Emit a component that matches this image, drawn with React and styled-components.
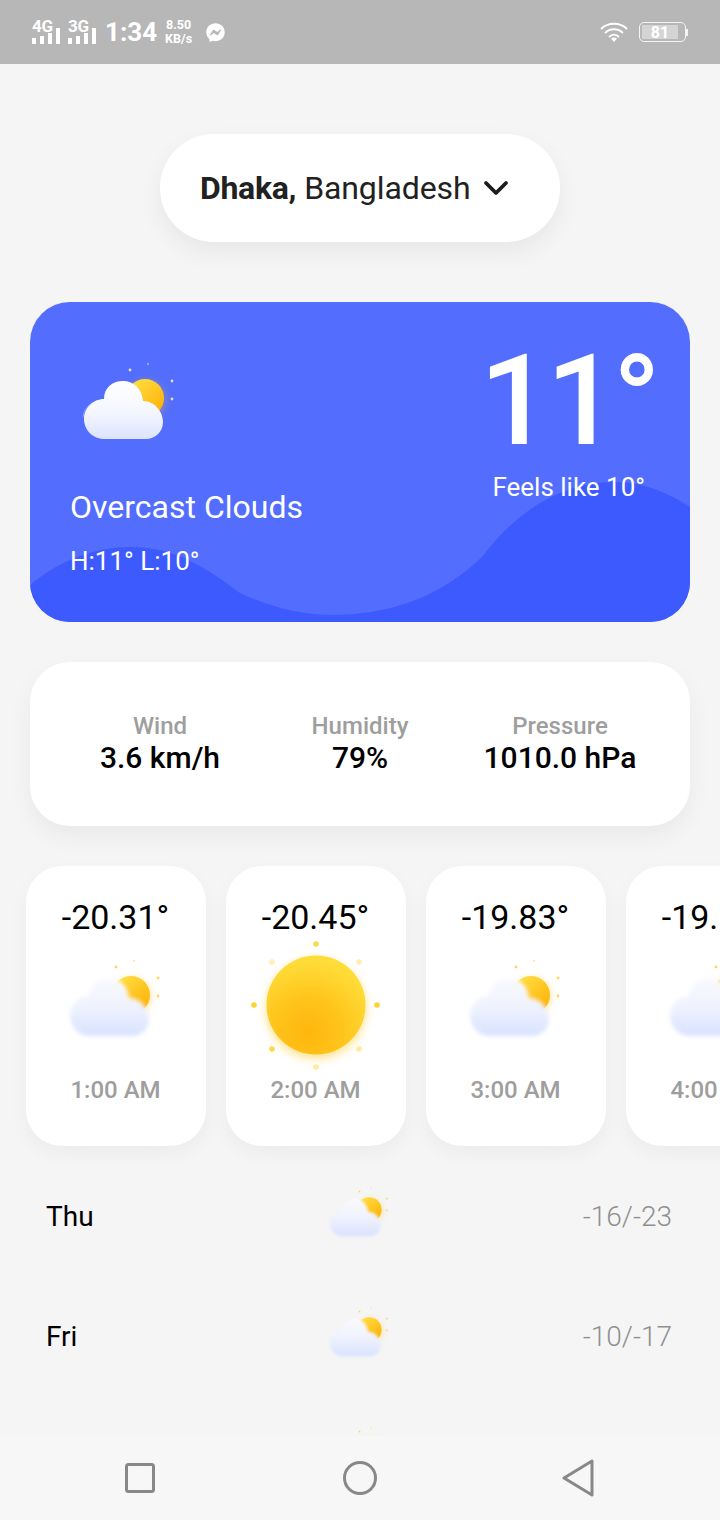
import React from "react";
import styled, { createGlobalStyle } from "styled-components";
import { FaFacebookMessenger } from "react-icons/fa";

const hours = [
  { temp: "-20.31°", time: "1:00 AM", icon: "cloud" },
  { temp: "-20.45°", time: "2:00 AM", icon: "sun" },
  { temp: "-19.83°", time: "3:00 AM", icon: "cloud" },
  { temp: "-19.52°", time: "4:00 AM", icon: "cloud" },
];

const days = [
  { day: "Thu", range: "-16/-23" },
  { day: "Fri", range: "-10/-17" },
  { day: "", range: "" },
];

const stats = [
  { label: "Wind", value: "3.6 km/h" },
  { label: "Humidity", value: "79%" },
  { label: "Pressure", value: "1010.0 hPa" },
];

function SignalBars() {
  return (
    <svg width="28" height="16" viewBox="0 0 28 16">
      <rect x="0" y="10" width="4" height="6" fill="#fff" />
      <rect x="8" y="8" width="4" height="8" fill="#fff" />
      <rect x="16" y="5" width="4" height="11" fill="#fff" />
      <rect x="24" y="0" width="4" height="16" fill="#fff" />
    </svg>
  );
}

function WifiIcon() {
  return (
    <svg width="28" height="20" viewBox="0 0 28 20" fill="none" stroke="#fff" strokeWidth="1.8">
      <path d="M1 7 C8 0 20 0 27 7" />
      <path d="M5 11 C10 6 18 6 23 11" />
      <path d="M9 15 C12 12 16 12 19 15" />
      <path d="M11 16.5 L14 20 L17 16.5 C15 15 13 15 11 16.5 Z" fill="#fff" stroke="none" />
    </svg>
  );
}

function CloudSun({ soft, width }) {
  const dot = soft ? "#ffd75e" : "#e6dfae";
  return (
    <SunCloudSvg $width={width} viewBox="0 0 100 84">
      <defs>
        <linearGradient id="sunFill" x1="0.2" y1="0.1" x2="0.8" y2="0.9">
          <stop offset="0" stopColor="#ffdc3e" />
          <stop offset="1" stopColor="#ffb20a" />
        </linearGradient>
        <linearGradient id="cloudHero" x1="0" y1="0" x2="0" y2="1">
          <stop offset="0" stopColor="#ffffff" />
          <stop offset="0.55" stopColor="#f4f6ff" />
          <stop offset="1" stopColor="#dbe3ff" />
        </linearGradient>
        <linearGradient id="cloudSoft" x1="0" y1="0" x2="0" y2="1">
          <stop offset="0" stopColor="#fafafe" />
          <stop offset="0.5" stopColor="#eff2fe" />
          <stop offset="1" stopColor="#d9e2ff" />
        </linearGradient>
      </defs>
      <circle cx="50" cy="10" r="1.4" fill={dot} />
      <circle cx="68" cy="4" r="1.2" fill={dot} opacity="0.5" />
      <circle cx="92" cy="21" r="1.4" fill={dot} />
      <circle cx="92" cy="39" r="1.4" fill={dot} />
      <SunGlow cx="66" cy="40" r="18" />
      <circle cx="65" cy="38" r="19" fill="url(#sunFill)" />
      {!soft && <path d="M3 57 C4 47 12 41 23 40" fill="none" stroke="#fff" strokeWidth="0.7" opacity="0.5" />}
      <CloudShape
        $soft={soft}
        fill={soft ? "url(#cloudSoft)" : "url(#cloudHero)"}
        d="M24 79 C13 79 4 70 4 59 C4 48 13 39 24 39 C24 28 32 21 43 21 C54 21 62 29 63 41 C75 41 83 52 83 62 C83 72 75 79 66 79 Z"
      />
    </SunCloudSvg>
  );
}

function BigSun() {
  return (
    <svg width="130" height="130" viewBox="0 0 130 130" style={{ overflow: "visible" }}>
      <defs>
        <radialGradient id="bigSunFill" cx="0.42" cy="0.78" r="0.72">
          <stop offset="0" stopColor="#ffb60c" />
          <stop offset="0.45" stopColor="#ffc31a" />
          <stop offset="1" stopColor="#ffdc38" />
        </radialGradient>
      </defs>
      <SunGlow cx="65" cy="69" r="50" />
      <circle cx="65" cy="65" r="49.5" fill="url(#bigSunFill)" />
      <circle cx="65" cy="4" r="2.8" fill="#ffd84a" />
      <circle cx="21" cy="22" r="2.8" fill="#fff0b4" />
      <circle cx="108" cy="22" r="2.8" fill="#ffeeb0" />
      <circle cx="3" cy="65" r="2.8" fill="#ffd233" />
      <circle cx="126" cy="65" r="2.8" fill="#ffd233" />
      <circle cx="21" cy="109" r="2.8" fill="#ffd84a" />
      <circle cx="108" cy="109" r="2.8" fill="#ffeaa0" />
      <circle cx="65" cy="127" r="2.8" fill="#ffeaa0" />
    </svg>
  );
}

export default function App() {
  return (
    <Screen>
      <GlobalStyle />
      <StatusBar>
        <StatusGroup>
          <Network>
            <NetworkLabel>4G</NetworkLabel>
            <SignalBars />
          </Network>
          <Network>
            <NetworkLabel>3G</NetworkLabel>
            <SignalBars />
          </Network>
          <Clock>1:34</Clock>
          <Speed>
            <span>8.50</span>
            <span>KB/s</span>
          </Speed>
          <FaFacebookMessenger size={19} color="#fff" />
        </StatusGroup>
        <StatusGroup>
          <WifiIcon />
          <Battery>
            <BatteryBody>
              <BatteryFill>81</BatteryFill>
            </BatteryBody>
            <BatteryTip />
          </Battery>
        </StatusGroup>
      </StatusBar>

      <Content>
        <LocationPill>
          <City>Dhaka,</City>
          <Country>Bangladesh</Country>
          <svg width="26" height="16" viewBox="0 0 26 16" fill="none" stroke="#1c1c1c" strokeWidth="3.8" strokeLinecap="round" strokeLinejoin="round">
            <path d="M3 3 L13 13 L23 3" />
          </svg>
        </LocationPill>

        <HeroCard>
          <Wave viewBox="0 0 660 320" preserveAspectRatio="none">
            <path
              fill="#3d5afe"
              d="M0 283 C30 258 65 245 101 245 C145 245 175 265 210 291 C240 305 270 313 301 313 C360 313 410 295 452 255 C490 205 535 180 585 180 C615 180 640 192 660 205 V320 H0 Z"
            />
          </Wave>
          <HeroLeft>
            <CloudSun width={100} />
            <Condition>Overcast Clouds</Condition>
            <HighLow>H:11° L:10°</HighLow>
          </HeroLeft>
          <HeroRight>
            <BigTemp>11°</BigTemp>
            <FeelsLike>Feels like 10°</FeelsLike>
          </HeroRight>
        </HeroCard>

        <StatsCard>
          {stats.map((s) => (
            <Stat key={s.label}>
              <StatLabel>{s.label}</StatLabel>
              <StatValue>{s.value}</StatValue>
            </Stat>
          ))}
        </StatsCard>

        <HourRow>
          {hours.map((h) => (
            <HourCard key={h.time}>
              <HourTemp>{h.temp}</HourTemp>
              <HourIcon $raised={h.icon === "cloud"}>
                {h.icon === "sun" ? <BigSun /> : <CloudSun soft width={100} />}
              </HourIcon>
              <HourTime>{h.time}</HourTime>
            </HourCard>
          ))}
        </HourRow>

        <DayList>
          {days.map((d, i) => (
            <DayRow key={i}>
              <DayName>{d.day}</DayName>
              <DayIcon>
                <CloudSun soft width={65} />
              </DayIcon>
              <DayRange>{d.range}</DayRange>
            </DayRow>
          ))}
        </DayList>
      </Content>

      <NavBar>
        <svg width="30" height="30" viewBox="0 0 30 30" fill="none" stroke="#888" strokeWidth="3">
          <rect x="1.5" y="1.5" width="27" height="27" rx="2" />
        </svg>
        <svg width="34" height="34" viewBox="0 0 34 34" fill="none" stroke="#888" strokeWidth="3">
          <circle cx="17" cy="17" r="15.5" />
        </svg>
        <svg width="32" height="38" viewBox="0 0 32 38" fill="none" stroke="#888" strokeWidth="3" strokeLinejoin="round">
          <path d="M30 2 V36 L2 19 Z" />
        </svg>
      </NavBar>
    </Screen>
  );
}

const GlobalStyle = createGlobalStyle`
  html, body {
    margin: 0;
    padding: 0;
    background: #f5f5f5;
  }
  * {
    box-sizing: border-box;
  }
`;

const Screen = styled.div`
  width: 720px;
  height: 1520px;
  display: flex;
  flex-direction: column;
  overflow: hidden;
  background: #f5f5f5;
  font-family: Roboto, "Liberation Sans", sans-serif;
`;

const StatusBar = styled.div`
  height: 64px;
  flex: none;
  display: flex;
  align-items: center;
  justify-content: space-between;
  padding: 0 32px;
  background: #b7b7b7;
  color: #fff;
`;

const StatusGroup = styled.div`
  display: flex;
  align-items: center;
  gap: 8px;
`;

const Network = styled.div`
  display: flex;
  flex-direction: column;
  gap: 0;
  margin-top: -2px;
  svg {
    margin-top: -5px;
  }
`;

const NetworkLabel = styled.span`
  font-size: 17px;
  line-height: 14px;
  font-weight: 700;
  letter-spacing: -0.2px;
`;

const Clock = styled.span`
  margin-left: 1px;
  font-size: 26px;
  font-weight: 700;
`;

const Speed = styled.div`
  display: flex;
  flex-direction: column;
  align-items: center;
  font-size: 12.5px;
  line-height: 14px;
  font-weight: 700;
  margin-right: 6px;
`;

const Battery = styled.div`
  display: flex;
  align-items: center;
  margin-left: 3px;
`;

const BatteryBody = styled.div`
  width: 47px;
  height: 20px;
  padding: 2px;
  border: 1.5px solid #f4f4f4;
  border-radius: 5px;
`;

const BatteryFill = styled.div`
  width: 36px;
  height: 100%;
  display: flex;
  align-items: center;
  justify-content: center;
  background: #d4d4d4;
  font-size: 16px;
  font-weight: 700;
`;

const BatteryTip = styled.div`
  width: 2px;
  height: 7px;
  background: #f4f4f4;
`;

const Content = styled.div`
  flex: 1;
  min-height: 0;
  overflow: hidden;
  display: flex;
  flex-direction: column;
`;

const LocationPill = styled.div`
  flex: none;
  align-self: center;
  width: 400px;
  height: 108px;
  margin-top: 70px;
  display: flex;
  align-items: center;
  padding-left: 40px;
  border-radius: 54px;
  background: #fff;
  box-shadow: 0 10px 24px rgba(0, 0, 0, 0.06);
  color: #212121;
  font-size: 32px;
  svg {
    margin-left: 13px;
  }
`;

const City = styled.span`
  font-weight: 700;
  letter-spacing: -0.3px;
  margin-right: 8px;
`;

const Country = styled.span`
  font-weight: 400;
  letter-spacing: -0.1px;
`;

const HeroCard = styled.div`
  position: relative;
  flex: none;
  width: 660px;
  height: 320px;
  margin: 60px 0 0 30px;
  display: flex;
  justify-content: space-between;
  overflow: hidden;
  border-radius: 40px;
  background: #536dfe;
  color: #fff;
`;

const Wave = styled.svg`
  position: absolute;
  inset: 0;
  width: 100%;
  height: 100%;
`;

const HeroLeft = styled.div`
  position: relative;
  display: flex;
  flex-direction: column;
  padding: 58px 0 0 40px;
  svg {
    margin-left: 10px;
  }
`;

const Condition = styled.div`
  margin-top: 43px;
  font-size: 32px;
  line-height: 40px;
  font-weight: 400;
`;

const HighLow = styled.div`
  margin-top: 19px;
  font-size: 26px;
  line-height: 30px;
  font-weight: 400;
`;

const HeroRight = styled.div`
  position: relative;
  display: flex;
  flex-direction: column;
  align-items: flex-end;
  padding: 29px 34px 0 0;
`;

const BigTemp = styled.div`
  font-size: 126px;
  line-height: 140px;
  font-weight: 500;
  letter-spacing: -5px;
`;

const FeelsLike = styled.div`
  margin: -1px 11px 0 0;
  font-size: 26px;
  line-height: 34px;
  font-weight: 400;
`;

const StatsCard = styled.div`
  flex: none;
  width: 660px;
  height: 164px;
  margin: 40px 0 0 30px;
  padding: 0 30px;
  display: grid;
  grid-template-columns: repeat(3, 1fr);
  align-items: center;
  border-radius: 40px;
  background: #fff;
  box-shadow: 0 10px 24px rgba(0, 0, 0, 0.05);
`;

const Stat = styled.div`
  display: flex;
  flex-direction: column;
  align-items: center;
  padding-bottom: 3px;
`;

const StatLabel = styled.div`
  font-size: 24px;
  line-height: 32px;
  font-weight: 500;
  color: #9e9e9e;
`;

const StatValue = styled.div`
  margin-top: -1px;
  font-size: 30px;
  line-height: 34px;
  font-weight: 500;
  color: #000;
`;

const HourRow = styled.div`
  flex: none;
  display: flex;
  gap: 20px;
  margin-top: 40px;
  padding-left: 26px;
`;

const HourCard = styled.div`
  flex: none;
  width: 180px;
  height: 280px;
  padding-top: 30px;
  display: flex;
  flex-direction: column;
  align-items: center;
  border-radius: 36px;
  background: #fff;
  box-shadow: 0 8px 20px rgba(0, 0, 0, 0.04);
`;

const HourTemp = styled.div`
  margin-left: -1px;
  font-size: 34px;
  line-height: 42px;
  font-weight: 400;
  color: #000;
`;

const HourIcon = styled.div`
  height: 134px;
  display: flex;
  align-items: center;
  justify-content: center;
  padding-bottom: ${(p) => (p.$raised ? "12px" : "0")};
`;

const HourTime = styled.div`
  margin-left: -1px;
  font-size: 24px;
  line-height: 36px;
  font-weight: 500;
  color: #9e9e9e;
`;

const DayList = styled.div`
  flex: none;
  margin-top: 10px;
`;

const DayRow = styled.div`
  height: 120px;
  padding: 0 48px 0 46px;
  display: grid;
  grid-template-columns: 1fr auto 1fr;
  align-items: center;
`;

const DayName = styled.div`
  font-size: 28px;
  color: #000;
`;

const DayIcon = styled.div`
  display: flex;
  padding-bottom: 8px;
`;

const DayRange = styled.div`
  justify-self: end;
  font-size: 28px;
  font-weight: 300;
  color: #8f8f8f;
`;

const NavBar = styled.div`
  flex: none;
  height: 84px;
  display: flex;
  align-items: center;
  justify-content: space-between;
  padding: 0 126px 0 125px;
  background: #f7f7f7;
  svg:nth-child(2) {
    margin-left: 2px;
  }
`;

const SunCloudSvg = styled.svg`
  flex: none;
  width: ${(p) => p.$width}px;
  overflow: visible;
`;

const SunGlow = styled.circle`
  fill: #ffc107;
  opacity: 0.45;
  filter: blur(5px);
`;

const CloudShape = styled.path`
  filter: ${(p) => (p.$soft ? "blur(2.2px)" : "blur(0.5px)")};
`;
